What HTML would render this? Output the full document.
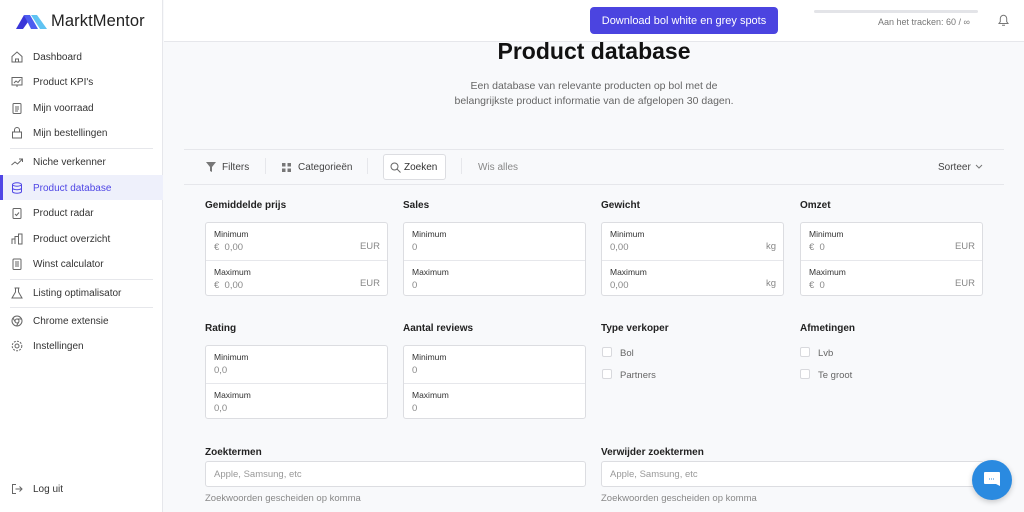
<!DOCTYPE html>
<html><head><meta charset="utf-8"><style>
*{margin:0;padding:0;box-sizing:border-box}
body{width:1024px;height:512px;overflow:hidden;background:#f8f9fb;font-family:"Liberation Sans",sans-serif;color:#222;position:relative}
.a{position:absolute}
#side{left:0;top:0;width:163px;height:512px;background:#fff;border-right:1px solid #e6e7eb}
.ni{position:absolute;left:0;width:163px;height:25px;font-size:10px;color:#333;padding-left:33px;line-height:27px}
.ni svg{position:absolute;left:11px;top:7px}
.sep{position:absolute;left:10px;width:143px;height:1px;background:#e6e7eb}
#top{left:164px;top:0;width:860px;height:42px;background:#fff;border-bottom:1px solid #e6e7eb}
.lbl{font-size:10px;font-weight:bold;color:#222}
.box{background:#fff;border:1px solid #dcdde1;border-radius:3px;width:183px;height:74px}
.half{height:37px;position:relative;padding:6px 8px;font-size:8.5px;color:#333}
.half+.half{border-top:1px solid #e6e7eb}
.half .v{font-size:9.5px;color:#888;margin-top:3px}
.half .u{position:absolute;right:7px;bottom:8px;font-size:9.5px;color:#888}
.cb{font-size:9.5px;color:#666}
.cb i{display:inline-block;width:10px;height:10px;border:1px solid #d8d9dd;border-radius:2px;background:#fff;vertical-align:-1px;margin-right:8px}
.inp{background:#fff;border:1px solid #dcdde1;border-radius:3px;width:383px;height:26px;font-size:9.5px;color:#999;padding:7px 8px}
.hint{font-size:9.5px;color:#888}
</style></head><body>
<div id="side" class="a">
  <div class="a" style="left:16px;top:12px;width:150px;height:20px">
    <svg width="32" height="17" viewBox="0 0 32 17" style="position:absolute;left:0;top:1px"><polygon points="0,16 8,2 12,9 7,16" fill="#3a36d8"/><polygon points="8,2 14,2 22,16 15,16" fill="#4c5cf0"/><polygon points="15,2 21,2 31,16 24,16" fill="#5fc3f2"/></svg>
    <span style="position:absolute;left:35px;top:0px;font-size:16.5px;color:#222;letter-spacing:0.1px">MarktMentor</span>
  </div>
  <div class="ni" style="top:44px"><svg width="12" height="12" viewBox="0 0 12 12" fill="none" stroke="#666"><path d="M1 5.5L6 1l5 4.5V11H1z M4.5 11V8h3v3"/></svg>Dashboard</div>
  <div class="ni" style="top:69px"><svg width="12" height="12" viewBox="0 0 12 12" fill="none" stroke="#666"><rect x="1" y="1.5" width="10" height="7.5"/><path d="M3 7l2-2 2 1.5 2.5-3 M6 9v2"/></svg>Product KPI's</div>
  <div class="ni" style="top:95px"><svg width="12" height="12" viewBox="0 0 12 12" fill="none" stroke="#666"><rect x="2" y="1.5" width="8" height="10" rx="1"/><path d="M4 5h4M4 7h4M4 9h3"/></svg>Mijn voorraad</div>
  <div class="ni" style="top:120px"><svg width="12" height="12" viewBox="0 0 12 12" fill="none" stroke="#666"><path d="M1.5 5h9v6h-9z M3.5 5V3a2.5 2.5 0 015 0v2"/></svg>Mijn bestellingen</div>
  <div class="sep" style="top:148px"></div>
  <div class="ni" style="top:149px"><svg width="12" height="12" viewBox="0 0 12 12" fill="none" stroke="#666"><path d="M0.5 9l3.5-3 2.5 2 5-5M8 3h3.5v3"/></svg>Niche verkenner</div>
  <div class="a" style="left:0;top:175px;width:163px;height:25px;background:#eef0fb"></div>
  <div class="a" style="left:0;top:175px;width:3px;height:25px;background:#4f46e5"></div>
  <div class="ni" style="top:175px;color:#4f46e5"><svg width="12" height="12" viewBox="0 0 12 12" fill="none" stroke="#4f46e5"><ellipse cx="6" cy="2.5" rx="4.5" ry="1.7"/><path d="M1.5 2.5v7c0 1 2 1.7 4.5 1.7s4.5-.7 4.5-1.7v-7M1.5 6c0 1 2 1.7 4.5 1.7s4.5-.7 4.5-1.7"/></svg>Product database</div>
  <div class="ni" style="top:200px"><svg width="12" height="12" viewBox="0 0 12 12" fill="none" stroke="#666"><rect x="2" y="1.5" width="8" height="10" rx="1"/><path d="M4 7l1.5 1.5L8 5.5"/></svg>Product radar</div>
  <div class="ni" style="top:226px"><svg width="12" height="12" viewBox="0 0 12 12" fill="none" stroke="#666"><path d="M1 11V6h3v5M4 11V3.5h3.5V11M7.5 11V1H11v10z"/></svg>Product overzicht</div>
  <div class="ni" style="top:251px"><svg width="12" height="12" viewBox="0 0 12 12" fill="none" stroke="#666"><rect x="2" y="1" width="8" height="10.5" rx="1"/><path d="M4 4h4M4 6h4M4 8h4"/></svg>Winst calculator</div>
  <div class="sep" style="top:279px"></div>
  <div class="ni" style="top:280px"><svg width="12" height="12" viewBox="0 0 12 12" fill="none" stroke="#666"><path d="M4.5 1v4L1 11h10L7.5 5V1M3.5 1h5"/></svg>Listing optimalisator</div>
  <div class="sep" style="top:307px"></div>
  <div class="ni" style="top:308px"><svg width="12" height="12" viewBox="0 0 12 12" fill="none" stroke="#666"><circle cx="6" cy="6" r="5"/><circle cx="6" cy="6" r="2"/><path d="M6 4h4.5M4.3 7L2 3M7.7 7L5.5 11"/></svg>Chrome extensie</div>
  <div class="ni" style="top:333px"><svg width="12" height="12" viewBox="0 0 12 12" fill="none" stroke="#666"><circle cx="6" cy="6" r="2"/><circle cx="6" cy="6" r="4.8" stroke-dasharray="2 1.2"/></svg>Instellingen</div>
  <div class="ni" style="top:476px"><svg width="12" height="12" viewBox="0 0 12 12" fill="none" stroke="#666"><path d="M5 1.5H1.5v9H5M4.5 6H11M8.5 3.5L11 6 8.5 8.5"/></svg>Log uit</div>
</div>
<div id="top" class="a">
  <div class="a" style="left:426px;top:7px;width:188px;height:27px;background:#4b44e0;border-radius:4px;color:#fff;font-size:11px;text-align:center;line-height:28px">Download bol white en grey spots</div>
  <div class="a" style="left:650px;top:10px;width:164px;height:3px;background:#e3e4e8;border-radius:2px"></div>
  <div class="a" style="left:714px;top:17px;font-size:9px;color:#777">Aan het tracken: 60 / ∞</div>
  <svg class="a" style="left:833px;top:13px" width="13" height="14" viewBox="0 0 13 14" fill="none" stroke="#777"><path d="M2 10.5h9l-1.3-1.8V5.5a3.2 3.2 0 00-6.4 0v3.2z M5 12.3h3"/></svg>
</div>
<div class="a" style="left:164px;top:38px;width:860px;text-align:center;font-size:23px;font-weight:bold;color:#111">Product database</div>
<div class="a" style="left:164px;top:79px;width:860px;text-align:center;font-size:10.5px;color:#666;line-height:15px">Een database van relevante producten op bol met de<br>belangrijkste product informatie van de afgelopen 30 dagen.</div>
<div class="a" style="left:184px;top:149px;width:820px;height:1px;background:#e6e7eb"></div>
<div class="a" style="left:184px;top:184px;width:820px;height:1px;background:#e6e7eb"></div>
<svg class="a" style="left:206px;top:162px" width="10" height="10" viewBox="0 0 10 10"><path d="M0 0h10L6 5v5L4 9V5z" fill="#777"/></svg>
<div class="a" style="left:222px;top:162px;font-size:10px;color:#444">Filters</div>
<div class="a" style="left:265px;top:158px;width:1px;height:16px;background:#e6e7eb"></div>
<svg class="a" style="left:282px;top:163px" width="9" height="9" viewBox="0 0 9 9" fill="#777"><rect width="3.5" height="3.5"/><rect x="5.5" width="3.5" height="3.5"/><rect y="5.5" width="3.5" height="3.5"/><rect x="5.5" y="5.5" width="3.5" height="3.5"/></svg>
<div class="a" style="left:298px;top:162px;font-size:10px;color:#444">Categorieën</div>
<div class="a" style="left:367px;top:158px;width:1px;height:16px;background:#e6e7eb"></div>
<div class="a" style="left:383px;top:154px;width:63px;height:26px;background:#fff;border:1px solid #dcdde1;border-radius:3px"></div>
<svg class="a" style="left:390px;top:162px" width="11" height="11" viewBox="0 0 11 11" fill="none" stroke="#666"><circle cx="4.5" cy="4.5" r="3.5"/><path d="M7 7l3.5 3.5"/></svg>
<div class="a" style="left:404px;top:162px;font-size:10px;color:#333">Zoeken</div>
<div class="a" style="left:461px;top:158px;width:1px;height:16px;background:#e6e7eb"></div>
<div class="a" style="left:478px;top:162px;font-size:10px;color:#888">Wis alles</div>
<div class="a" style="left:938px;top:162px;font-size:10px;color:#444">Sorteer</div>
<svg class="a" style="left:975px;top:164px" width="8" height="6" viewBox="0 0 8 6" fill="none" stroke="#777"><path d="M1 1l3 3 3-3"/></svg>

<div class="a lbl" style="left:205px;top:200px">Gemiddelde prijs</div>
<div class="a lbl" style="left:403px;top:200px">Sales</div>
<div class="a lbl" style="left:601px;top:200px">Gewicht</div>
<div class="a lbl" style="left:800px;top:200px">Omzet</div>
<div class="a box" style="left:205px;top:222px"><div class="half">Minimum<div class="v">€&nbsp; 0,00</div><span class="u">EUR</span></div><div class="half">Maximum<div class="v">€&nbsp; 0,00</div><span class="u">EUR</span></div></div>
<div class="a box" style="left:403px;top:222px"><div class="half">Minimum<div class="v">0</div></div><div class="half">Maximum<div class="v">0</div></div></div>
<div class="a box" style="left:601px;top:222px"><div class="half">Minimum<div class="v">0,00</div><span class="u">kg</span></div><div class="half">Maximum<div class="v">0,00</div><span class="u">kg</span></div></div>
<div class="a box" style="left:800px;top:222px"><div class="half">Minimum<div class="v">€&nbsp; 0</div><span class="u">EUR</span></div><div class="half">Maximum<div class="v">€&nbsp; 0</div><span class="u">EUR</span></div></div>

<div class="a lbl" style="left:205px;top:323px">Rating</div>
<div class="a lbl" style="left:403px;top:323px">Aantal reviews</div>
<div class="a lbl" style="left:601px;top:323px">Type verkoper</div>
<div class="a lbl" style="left:800px;top:323px">Afmetingen</div>
<div class="a box" style="left:205px;top:345px"><div class="half">Minimum<div class="v">0,0</div></div><div class="half">Maximum<div class="v">0,0</div></div></div>
<div class="a box" style="left:403px;top:345px"><div class="half">Minimum<div class="v">0</div></div><div class="half">Maximum<div class="v">0</div></div></div>
<div class="a cb" style="left:602px;top:347px"><i></i>Bol</div>
<div class="a cb" style="left:602px;top:369px"><i></i>Partners</div>
<div class="a cb" style="left:800px;top:347px"><i></i>Lvb</div>
<div class="a cb" style="left:800px;top:369px"><i></i>Te groot</div>

<div class="a lbl" style="left:205px;top:447px">Zoektermen</div>
<div class="a lbl" style="left:601px;top:447px">Verwijder zoektermen</div>
<div class="a inp" style="left:205px;top:461px;width:381px">Apple, Samsung, etc</div>
<div class="a inp" style="left:601px;top:461px">Apple, Samsung, etc</div>
<div class="a hint" style="left:205px;top:493px">Zoekwoorden gescheiden op komma</div>
<div class="a hint" style="left:601px;top:493px">Zoekwoorden gescheiden op komma</div>
<div class="a" style="left:972px;top:460px;width:40px;height:40px;border-radius:50%;background:#2a8ae0;box-shadow:0 2px 6px rgba(0,0,0,.2)"></div>
<svg class="a" style="left:982px;top:470px" width="20" height="20" viewBox="0 0 20 20"><path d="M3 2h14a1 1 0 011 1v13l-4-2H3a1 1 0 01-1-1V3a1 1 0 011-1z" fill="#fff"/><path d="M7 9h6" stroke="#2a8ae0" stroke-dasharray="1 1"/></svg>
</body></html>
